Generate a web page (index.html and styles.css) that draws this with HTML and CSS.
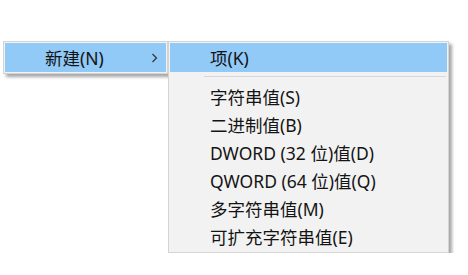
FILE: index.html
```html
<!DOCTYPE html>
<html lang="zh-CN">
    <head>
        <meta charset="UTF-8" />
        <title>新建</title>
        <link rel="stylesheet" href="styles.css">
    </head>
    <body>
        <div class="menus">
            <!-- parent menu, only the open item is visible -->
            <div class="menu parent-menu">
                <div class="menu-item active">
                    <span class="label">新建(N)</span>
                    <svg class="chevron" width="7" height="10" viewBox="0 0 7 10">
                        <polyline points="1.5,1 5.5,5 1.5,9" fill="none" stroke="#333" stroke-width="1.2" />
                    </svg>
                </div>
            </div>

            <!-- submenu -->
            <div class="menu sub-menu">
                <div class="menu-item active"><span class="label">项(K)</span></div>
                <div class="separator"></div>
                <div class="menu-item"><span class="label">字符串值(S)</span></div>
                <div class="menu-item"><span class="label">二进制值(B)</span></div>
                <div class="menu-item"><span class="label">DWORD (32 位)值(D)</span></div>
                <div class="menu-item"><span class="label">QWORD (64 位)值(Q)</span></div>
                <div class="menu-item"><span class="label">多字符串值(M)</span></div>
                <div class="menu-item"><span class="label">可扩充字符串值(E)</span></div>
            </div>
        </div>
    </body>
</html>
```

FILE: styles.css
```css
body {
    margin: 0;
    background-color: #ffffff;
    font-family: "Noto Sans", "Noto Sans CJK SC", sans-serif;
    font-size: 17.5px;
    color: #141414;
}
.menus {
    display: flex;
    align-items: flex-start;
    padding: 41px 0 0 3px;
}
.menu {
    background-color: #f2f2f2;
    border: 1px solid #d4d4d4;
    box-shadow: 3px 3px 3px rgba(0,0,0,0.35);
}
.parent-menu {
    width: 163px;
    padding: 1px 0;
}
.sub-menu {
    width: 279px;
    padding: 1px 0 2px;
}
.menu-item {
    display: flex;
    align-items: center;
    height: 28px;
    margin: 0 1px;
}
.menu-item.active {
    background-color: #91c9f7;
    height: 29px;
}
.parent-menu .label {
    margin-left: 40px;
    flex: 1;
}
.chevron {
    margin-right: 8px;
}
.sub-menu .label {
    margin-left: 40px;
}
.separator {
    height: 1px;
    background-color: #d7d7d7;
    margin: 4px 2px 5px 35px;
}
```
